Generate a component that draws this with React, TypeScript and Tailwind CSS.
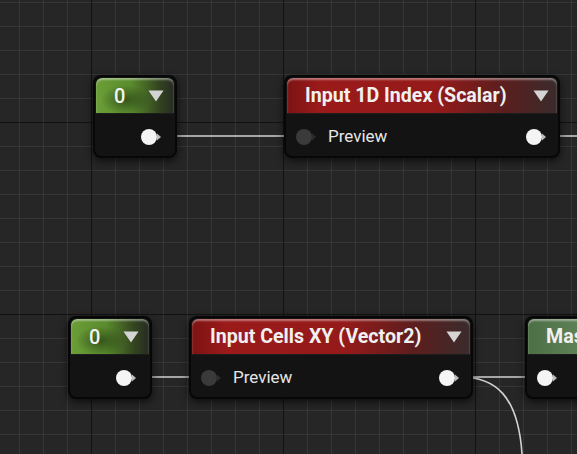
import React from 'react';

type PinProps = { kind: 'in' | 'out' };

// round exec-style pin with the small arrow tip
const Pin = ({ kind }: PinProps) => {
  const fill = kind === 'out' ? '#f4f4f4' : '#3a3a3a';
  const tip = kind === 'out' ? '#bdbdbd' : '#2c2c2c';
  return (
    <svg width="22" height="18" viewBox="0 0 22 18" className="shrink-0">
      <circle cx="9" cy="9" r="8" fill={fill} />
      <path d="M17 5.5 L21 9 L17 12.5 Z" fill={tip} />
    </svg>
  );
};

const Arrow = () => (
  <svg width="16" height="12" viewBox="0 0 16 12" className="shrink-0">
    <path d="M0.5 0.5 H15.5 L8 11.5 Z" fill="#d4d4d4" />
  </svg>
);

const nodeShell =
  'absolute h-[83px] rounded-[8px] border-2 border-[#070707] bg-[#121312] p-px shadow-[0_3px_8px_rgba(0,0,0,0.65)] flex flex-col overflow-hidden';

const greenHeader =
  'h-[35px] rounded-t-[6px] flex items-center shadow-[inset_0_2px_2px_rgba(255,255,255,0.4)] bg-[radial-gradient(ellipse_45%_60%_at_38%_62%,rgba(20,40,10,0.55),transparent_70%),linear-gradient(to_right,#6b9d37,#5a8b2d_45%,#34461f_80%,#262a22)]';

const redHeader =
  'h-[35px] rounded-t-[6px] flex items-center shadow-[inset_0_2px_2px_rgba(255,255,255,0.4)] bg-[linear-gradient(to_right,#7c1313,#9b1a1a_12%,#951a1a_55%,#5c1e1e_80%,#3a2b2b)]';

const titleFont = "font-['Roboto',sans-serif]";

const ConstNode = ({ pos }: { pos: string }) => (
  <div className={`${nodeShell} w-[84px] ${pos}`}>
    <div className={`${greenHeader} pl-[18px] pr-[10px] justify-between`}>
      <span className={`${titleFont} text-[20px] font-medium text-[#f2f2f2] leading-none`}>0</span>
      <Arrow />
    </div>
    <div className="h-px bg-[#1c1d1c]" />
    <div className="flex-1 flex items-center justify-end pt-[4px] pr-[12px]">
      <Pin kind="out" />
    </div>
  </div>
);

const InputNode = ({ pos, width, title }: { pos: string; width: string; title: string }) => (
  <div className={`${nodeShell} ${width} ${pos}`}>
    <div className={`${redHeader} pl-[18px] pr-[8px] justify-between`}>
      <span className={`${titleFont} text-[19.6px] font-bold text-[#f0f0f0] leading-none whitespace-nowrap`}>
        {title}
      </span>
      <Arrow />
    </div>
    <div className="h-px bg-[#1c1d1c]" />
    <div className="flex-1 flex items-center pt-[4px] pl-[8px] pr-[10px]">
      <Pin kind="in" />
      <span className={`${titleFont} ml-[11px] text-[17px] text-[#e6e6e6]`}>Preview</span>
      <div className="flex-1" />
      <Pin kind="out" />
    </div>
  </div>
);

const App = () => {
  return (
    <div className="relative w-[577px] h-[454px] overflow-hidden bg-[#262626] [background-image:linear-gradient(to_right,#121212_1px,transparent_1px),linear-gradient(to_bottom,#121212_1px,transparent_1px),linear-gradient(to_right,#363636_1px,transparent_1px),linear-gradient(to_bottom,#363636_1px,transparent_1px)] [background-size:192px_192px,192px_192px,24px_24px,24px_24px] [background-position:91px_122px,91px_122px,19px_2px,19px_2px]">
      {/* wires */}
      <svg className="absolute inset-0" width="577" height="454" viewBox="0 0 577 454">
        <g stroke="#d2d2d2" strokeWidth="1.6" fill="none">
          <path d="M160 136 H300" />
          <path d="M540 136 H577" />
          <path d="M136 377 H205" />
          <path d="M455 377 H540" />
          <path d="M460 377 C495 377, 518 395, 522 454" />
        </g>
      </svg>

      <ConstNode pos="left-[93px] top-[75px]" />
      <InputNode pos="left-[284px] top-[75px]" width="w-[276px]" title="Input 1D Index (Scalar)" />

      <ConstNode pos="left-[68px] top-[316px]" />
      <InputNode pos="left-[189px] top-[316px]" width="w-[284px]" title="Input Cells XY (Vector2)" />

      {/* partially visible node at the right edge */}
      <div className={`${nodeShell} w-[120px] left-[525px] top-[316px]`}>
        <div className="h-[35px] rounded-t-[6px] flex items-center pl-[18px] shadow-[inset_0_2px_2px_rgba(255,255,255,0.4)] bg-[linear-gradient(to_right,#4d6f45,#5d7f55_40%,#587a50)]">
          <span className={`${titleFont} text-[19.6px] font-bold text-[#f0f0f0] leading-none whitespace-nowrap`}>
            Mask
          </span>
        </div>
        <div className="h-px bg-[#1c1d1c]" />
        <div className="flex-1 flex items-center pt-[4px] pl-[8px]">
          <Pin kind="out" />
        </div>
      </div>
    </div>
  );
};

export default App;
